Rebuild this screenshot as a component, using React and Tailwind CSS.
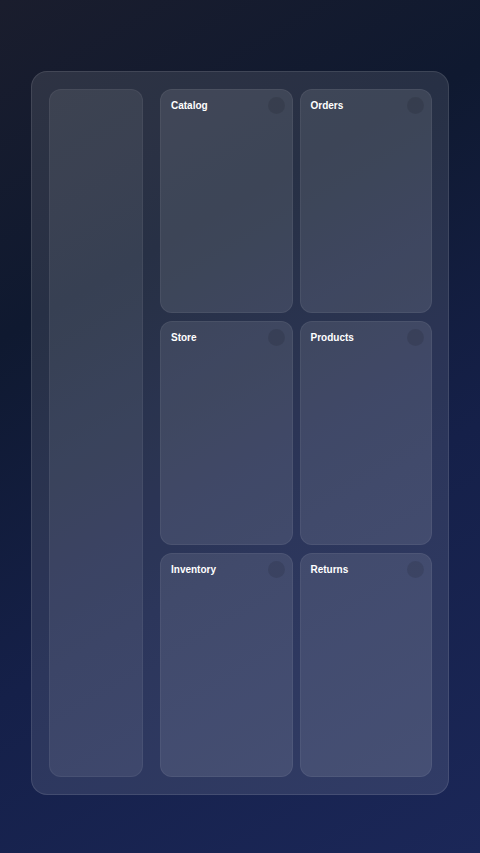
import React from "react";

const cards = ["Catalog", "Orders", "Store", "Products", "Inventory", "Returns"];

export default function App() {
  return (
    <div
      className="w-[480px] h-[853px] pt-[71px] pl-[31px] pr-[31px] pb-[58px] bg-[linear-gradient(150deg,#1a1d2d_0%,#0f1930_30%,#152049_62%,#1b2758_100%)]"
      style={{ fontFamily: '"Liberation Sans", Arial, sans-serif' }}
    >
      <div className="w-full h-full rounded-[16px] border border-white/10 bg-white/[0.1] pl-[17px] pr-[16px] py-[17px] flex gap-[17px]">
        <div className="w-[94px] shrink-0 rounded-[12px] border border-white/[0.05] bg-white/[0.08]" />
        <div className="flex-1 grid grid-cols-2 grid-rows-3 gap-x-[7px] gap-y-[8px]">
          {cards.map((c) => (
            <div
              key={c}
              className="relative rounded-[12px] border border-white/[0.06] bg-white/[0.1] px-[10px] pt-[10px]"
            >
              <div className="text-[10px] font-bold text-white leading-[12px]">{c}</div>
              <div className="absolute top-[7px] right-[7px] w-[17px] h-[17px] rounded-full bg-black/10" />
            </div>
          ))}
        </div>
      </div>
    </div>
  );
}
